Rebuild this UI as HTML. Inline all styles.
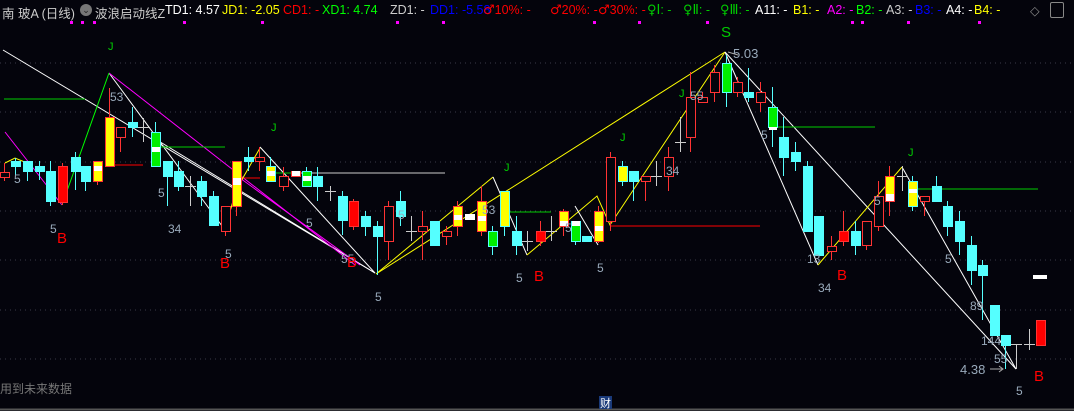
<!DOCTYPE html>
<html><head><meta charset="utf-8">
<style>
html,body{margin:0;padding:0;background:#04040c;width:1074px;height:411px;overflow:hidden}
#h{position:absolute;left:0;top:0;width:1074px;height:22px;font:12.5px "Liberation Sans","DejaVu Sans","Noto Sans CJK SC",sans-serif;}
#h span{position:absolute;top:3px;white-space:nowrap}
#h b{font-weight:normal;font-family:"DejaVu Sans",sans-serif;font-size:13px}
.d{position:absolute;top:21px;width:3px;height:3px;background:#f0f}
svg{position:absolute;left:0;top:0}
</style></head><body>
<svg id="s" width="1074" height="411" xmlns="http://www.w3.org/2000/svg" font-family="Liberation Sans, sans-serif">
<g stroke="#3a3a48" stroke-dasharray="1,4">
<line x1="0" y1="63" x2="1074" y2="63"/><line x1="0" y1="112" x2="1074" y2="112"/><line x1="0" y1="162" x2="1074" y2="162"/><line x1="0" y1="211" x2="1074" y2="211"/><line x1="0" y1="260" x2="1074" y2="260"/><line x1="0" y1="310" x2="1074" y2="310"/><line x1="0" y1="359" x2="1074" y2="359"/>
</g>
<line x1="0" y1="409.5" x2="1074" y2="409.5" stroke="#555" stroke-width="2"/>
<g fill="none" stroke-width="1">
<polyline stroke="#fff" points="3,50 375,273"/>
<polyline stroke="#fff" points="109,73 225,230"/>
<polyline stroke="#fff" points="157,140 375,273"/>
<polyline stroke="#fff" points="260,147 375,273"/>
<polyline stroke="#f0f" points="5,132 62,205"/>
<polyline stroke="#f0f" points="109,73 355,265"/>
<polyline stroke="#f0f" points="233,173 360,265"/>
<polyline stroke="#0f0" points="62,205 109,73"/>
<line stroke="#0c0" x1="4" y1="99" x2="85" y2="99"/>
<line stroke="#0c0" x1="155" y1="147" x2="225" y2="147"/>
<line stroke="#0c0" x1="272" y1="173" x2="300" y2="173"/>
<line stroke="#ccc" x1="300" y1="173" x2="445" y2="173"/>
<line stroke="#f00" x1="105" y1="165" x2="143" y2="165"/>
<line stroke="#f00" x1="240" y1="178" x2="260" y2="178"/>
<polyline stroke="#ff0" points="5,163 15,158 27,163"/>
<polyline stroke="#ff0" points="225,230 236,190 260,148"/>
<polyline stroke="#ff0" points="376,274 493,177"/>
<polyline stroke="#ff0" points="376,274 725,52"/>
<polyline stroke="#fff" points="493,177 527,255"/>
<polyline stroke="#ff0" points="527,255 597,196 610,225 725,52"/>
<polyline stroke="#fff" points="575,206 598,245"/>
<line stroke="#0c0" x1="505" y1="212" x2="551" y2="212"/>
<line stroke="#f00" x1="610" y1="226" x2="760" y2="226"/>
<polyline stroke="#fff" points="725,52 818,265"/>
<polyline stroke="#fff" points="725,52 1016,369"/>
<polyline stroke="#ff0" points="818,265 902,167"/>
<polyline stroke="#fff" points="902,167 1016,369"/>
<line stroke="#0c0" x1="772" y1="127" x2="875" y2="127"/>
<line stroke="#0c0" x1="912" y1="189" x2="1038" y2="189"/>
<line stroke="#aaa" x1="990" y1="369" x2="1003" y2="369"/>
<polyline stroke="#aaa" points="999,366 1003,369 999,372"/>
<polyline stroke="#aaa" points="728,52 738,55"/>
</g>
<g id="c"></g>
<rect x="1033" y="275" width="14" height="4" fill="#fff"/>
<g font-size="12" fill="#9ab">
<text x="733" y="58" font-size="13">5.03</text>
<text x="960" y="374" font-size="13">4.38</text>
<text x="110" y="101">53</text><text x="14" y="183">5</text><text x="50" y="233">5</text><text x="158" y="197">5</text><text x="168" y="233">34</text><text x="225" y="258">5</text><text x="306" y="227">5</text><text x="341" y="263">55</text><text x="375" y="301">5</text><text x="398" y="219">5</text><text x="482" y="214">53</text><text x="516" y="282">5</text><text x="597" y="272">5</text><text x="565" y="232">5</text><text x="666" y="175">34</text><text x="690" y="100">55</text><text x="761" y="139">5</text><text x="807" y="263">13</text><text x="818" y="292">34</text><text x="874" y="205">5</text><text x="945" y="263">5</text><text x="970" y="310">89</text><text x="981" y="345">144</text><text x="994" y="363">55</text><text x="1016" y="395">5</text>
</g>
<g font-size="15" fill="#f00">
<text x="57" y="243">B</text><text x="220" y="268">B</text><text x="347" y="267">B</text><text x="534" y="281">B</text><text x="837" y="280">B</text><text x="1034" y="381">B</text>
</g>
<g font-size="11" fill="#0c0">
<text x="108" y="50">J</text><text x="271" y="131">J</text><text x="504" y="171">J</text><text x="620" y="141">J</text><text x="679" y="97">J</text><text x="908" y="156">J</text>
<text x="721" y="37" font-size="15">S</text>
</g>
<text x="0" y="393" font-size="12" fill="#777" font-family="Liberation Sans, Noto Sans CJK SC, sans-serif">用到未来数据</text>
<rect x="599" y="396" width="13" height="13" fill="#1a3a7a"/>
<text x="600" y="407" font-size="11" fill="#fff" font-family="Noto Sans CJK SC, sans-serif">财</text>
</svg>
<div id="h">
<span style="left:2px;color:#ccc">南 玻A (日线)</span>
<span style="left:80px;top:4px;width:12px;height:12px;border-radius:6px;background:#777;color:#222;font-size:9px;text-align:center;line-height:12px">⌄</span>
<span style="left:95px;color:#ccc">波浪启动线Z</span>
<span style="left:165px;color:#fff">TD1: 4.57</span>
<span style="left:222px;color:#ff0">JD1: -2.05</span>
<span style="left:283px;color:#f00">CD1: -</span>
<span style="left:322px;color:#0f0">XD1: 4.74</span>
<span style="left:390px;color:#ccc">ZD1: -</span>
<span style="left:430px;color:#00f">DD1: -5.58</span>
<span style="left:483px;color:#f00"><b>♂</b>10%: -</span>
<span style="left:550px;color:#f00"><b>♂</b>20%: -</span>
<span style="left:598px;color:#f00"><b>♂</b>30%: -</span>
<span style="left:647px;color:#0c0"><b>♀Ⅰ</b>: -</span>
<span style="left:683px;color:#0c0"><b>♀Ⅱ</b>: -</span>
<span style="left:720px;color:#0c0"><b>♀Ⅲ</b>: -</span>
<span style="left:755px;color:#fff">A11: -</span>
<span style="left:793px;color:#ff0">B1: -</span>
<span style="left:827px;color:#f0f">A2: -</span>
<span style="left:856px;color:#0f0">B2: -</span>
<span style="left:886px;color:#ccc">A3: -</span>
<span style="left:915px;color:#00f">B3: -</span>
<span style="left:946px;color:#fff">A4: -</span>
<span style="left:974px;color:#ff0">B4: -</span>
<span style="left:1030px;color:#888">◇</span>
<span style="left:1050px;top:2px;width:12px;height:14px;border:1px solid #888;border-radius:2px"></span>
<i class="d" style="left:70px"></i><i class="d" style="left:81px"></i><i class="d" style="left:93px"></i><i class="d" style="left:183px"></i><i class="d" style="left:261px"></i><i class="d" style="left:396px"></i><i class="d" style="left:442px"></i><i class="d" style="left:593px"></i><i class="d" style="left:638px"></i><i class="d" style="left:706px"></i><i class="d" style="left:851px"></i><i class="d" style="left:861px"></i><i class="d" style="left:907px"></i><i class="d" style="left:978px"></i>
</div>
<script>
var C=[[4,'r',172,177,163,181],[15,'c',161,166,158,175],[27,'c',161,171,161,181],[39,'c',166,171,161,180],[50,'c',171,201,161,206],[62,'R',166,202,163,205],[75,'c',157,171,152,190],[85,'c',166,181,166,191],[97,'y',161,181,161,185,166,171],[109,'y',117,166,88,166],[120,'r',127,137,127,152],[132,'c',122,127,107,137],[143,'w',127,127,118,142],[155,'g',132,166,122,166,147,152],[167,'c',161,176,161,206],[178,'c',171,186,161,191],[190,'w',186,186,176,206],[201,'c',181,196,176,206],[213,'c',196,225,191,225],[225,'r',206,231,206,236],[236,'y',161,206,161,216,178,185],[248,'c',157,161,147,171],[259,'r',157,161,147,171],[270,'Y',166,181,157,181,171,176],[283,'r',176,186,167,191],[295,'y',171,176,171,176,171,176],[306,'g',171,186,167,186,176,181],[317,'c',176,186,167,201],[330,'w',191,191,186,201],[342,'c',196,220,191,235],[353,'R',201,226,199,230],[365,'c',216,226,211,236],[377,'c',226,236,221,275],[388,'r',206,241,201,260],[400,'c',201,216,191,226],[411,'w',231,231,216,241],[422,'r',226,231,211,260],[434,'c',221,245,221,245],[446,'r',231,236,226,245],[457,'y',206,226,201,236,215,220],[469,'W',214,219,214,219],[481,'y',201,231,186,236,216,221],[492,'g',231,246,226,255],[504,'Y',191,226,191,236],[516,'c',231,245,216,255],[527,'w',241,241,231,251],[540,'R',231,241,221,246],[551,'w',231,231,216,241],[563,'y',211,226,209,236,221,226],[575,'g',221,241,221,245,221,226],[586,'c',236,241,236,241],[598,'y',211,241,206,243,226,231],[610,'r',157,221,152,231],[622,'Y',166,181,161,186],[633,'c',171,181,171,201],[645,'r',176,181,176,201],[656,'w',176,176,161,186],[668,'r',157,176,147,191],[680,'w',142,142,117,152],[690,'r',97,137,72,152],[702,'r',97,102,92,102],[714,'r',72,92,65,102],[726,'g',63,92,55,107],[737,'r',82,92,77,97],[748,'c',92,97,68,102],[760,'r',92,102,82,112],[772,'g',107,127,87,147,127,130],[783,'c',137,157,117,176],[795,'c',152,161,142,171],[807,'c',166,231,161,231],[818,'c',216,255,216,255],[831,'r',246,251,236,260],[843,'R',231,241,211,246],[855,'c',231,245,221,255],[866,'r',221,245,221,250],[878,'r',196,226,181,231],[889,'y',176,201,166,216,194,201],[902,'w',176,176,166,191],[912,'Y',181,206,176,211,189,193],[924,'r',196,201,196,216],[936,'c',186,201,176,201],[947,'c',206,226,201,236],[959,'c',221,241,211,255],[971,'c',245,270,236,285],[982,'c',265,275,260,320],[994,'c',305,335,305,335],[1005,'c',335,345,335,369],[1016,'w',344,344,344,369],[1029,'w',344,344,329,350],[1040,'R',320,345,320,345]];
var g=document.getElementById('c'),s='';
C.forEach(function(a){var x=a[0],t=a[1],o=a[2],c=a[3],h=a[4],l=a[5];var wc={c:'#5ff',r:'#f33',R:'#f33',y:'#f33',Y:'#5ff',g:'#5ff',w:'#ccc',W:'#fff'}[t];
s+='<line x1="'+(x+.5)+'" y1="'+h+'" x2="'+(x+.5)+'" y2="'+l+'" stroke="'+wc+'"/>';
var bx=x-4,bh=Math.max(c-o,1);
if(t=='w'){s+='<line x1="'+(x-5)+'" y1="'+(o+.5)+'" x2="'+(x+6)+'" y2="'+(o+.5)+'" stroke="#ccc"/>';return;}
var f={c:'#5ff',r:'#04040c',R:'#f00',y:'#ff0',Y:'#ff0',g:'#0e0',W:'#fff'}[t],st={c:'#5ff',r:'#f33',R:'#f33',y:'#f33',Y:'#5ff',g:'#5ff',W:'#fff'}[t];
s+='<rect x="'+(bx+.5)+'" y="'+(o+.5)+'" width="9" height="'+bh+'" fill="'+f+'" stroke="'+st+'"/>';
if(a.length>6)s+='<rect x="'+(bx+1)+'" y="'+a[6]+'" width="8" height="'+(a[7]-a[6])+'" fill="#fff"/>';});
g.innerHTML=s;
</script>
</body></html>
